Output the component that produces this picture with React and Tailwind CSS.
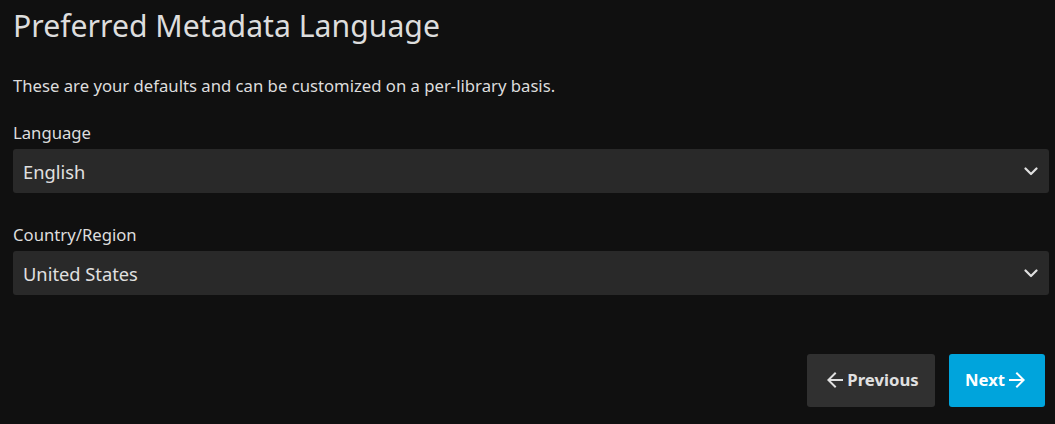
import { MdArrowBack, MdArrowForward } from "react-icons/md";

function Chevron() {
  return (
    <svg width="14" height="9" viewBox="0 0 14 9" fill="none" className="text-[#e0e0e0]">
      <polyline
        points="1.5,1.5 7,7 12.5,1.5"
        stroke="currentColor"
        strokeWidth="2.2"
        strokeLinecap="round"
        strokeLinejoin="round"
      />
    </svg>
  );
}

function SelectField({ label, value, labelMt, selectMt }) {
  return (
    <div className="flex flex-col">
      <label className={`text-[16.7px] leading-[24px] ${labelMt}`}>{label}</label>
      <div
        className={`${selectMt} flex h-[44px] w-[1036px] items-center justify-between rounded-[3px] bg-[#292929] pl-[10px] pr-[11px]`}
      >
        <span className="pt-[2px] text-[18.3px] leading-[24px] text-[#e0e0e0]">{value}</span>
        <Chevron />
      </div>
    </div>
  );
}

export default function App() {
  return (
    <main
      className="min-h-[424px] bg-[#101010] px-[13px] pt-[8px] text-[#dddddd]"
      style={{ fontFamily: '"Noto Sans", sans-serif' }}
    >
      <h1 className="text-[30.2px] leading-[36px] font-normal">Preferred Metadata Language</h1>
      <p className="mt-[30px] text-[16.7px] leading-[24px]">
        These are your defaults and can be customized on a per-library basis.
      </p>

      <SelectField label="Language" value="English" labelMt="mt-[23px]" selectMt="mt-[4px]" />
      <SelectField label="Country/Region" value="United States" labelMt="mt-[30px]" selectMt="mt-[4px]" />

      <div className="mt-[59px] mr-[-3px] flex justify-end gap-[14px]">
        <button className="flex h-[53px] w-[128px] items-center justify-center rounded-[3px] bg-[#303030] pb-[2px] text-[16.7px] font-bold text-[#e0e0e0]">
          <MdArrowBack size={24} />
          Previous
        </button>
        <button className="flex h-[53px] w-[96px] items-center justify-center rounded-[3px] bg-[#00a4dc] pb-[2px] text-[16.7px] font-bold text-white">
          Next
          <MdArrowForward size={24} />
        </button>
      </div>
    </main>
  );
}
